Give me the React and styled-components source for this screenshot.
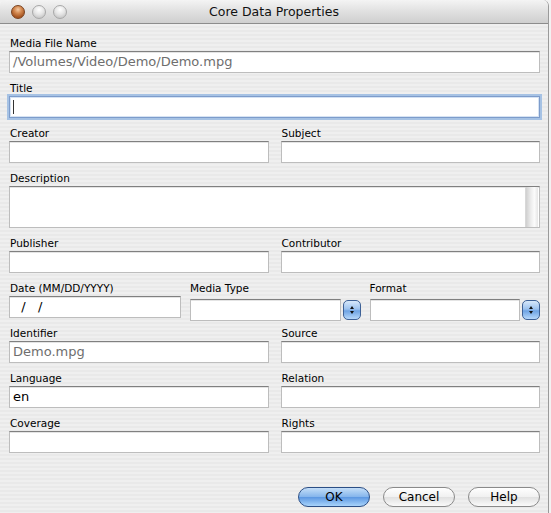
import React from "react";
import styled, { createGlobalStyle } from "styled-components";

const GlobalStyle = createGlobalStyle`
  body {
    margin: 0;
    background: #f2f2f2;
    font-family: "DejaVu Sans", "Liberation Sans", sans-serif;
  }
`;

const Window = styled.div`
  width: 549px;
  height: 513px;
  box-sizing: border-box;
  border-right: 1px solid #9a9a9a;
  border-radius: 6px 6px 0 0;
  overflow: hidden;
  display: flex;
  flex-direction: column;
  background: repeating-linear-gradient(
    to bottom,
    #efefef 0,
    #efefef 2px,
    #e9e9e9 2px,
    #e9e9e9 4px
  );
`;

const TitleBar = styled.div`
  position: relative;
  height: 23px;
  flex: none;
  display: flex;
  align-items: center;
  justify-content: center;
  border-bottom: 1px solid #8c8c8c;
  background: linear-gradient(to bottom, #f4f4f4, #dedede 55%, #cfcfcf);
`;

const Lights = styled.div`
  position: absolute;
  left: 11px;
  top: 5px;
  display: flex;
  gap: 7px;
`;

const Light = styled.span`
  width: 12px;
  height: 12px;
  border-radius: 50%;
  border: 1px solid ${(p) => (p.$close ? "#7a4320" : "#a8a8a8")};
  background: ${(p) =>
    p.$close
      ? "radial-gradient(circle at 50% 30%, #f3c9a2 0, #d48a52 35%, #a4521f 75%, #c77a3e 100%)"
      : "radial-gradient(circle at 50% 30%, #ffffff 0, #e6e6e6 45%, #c9c9c9 80%, #dedede 100%)"};
`;

const TitleText = styled.span`
  font-size: 12.5px;
  color: #111;
`;

const Form = styled.div`
  flex: 1;
  display: flex;
  flex-direction: column;
  gap: 8px;
  padding: 12px 8px 6px 9px;
`;

const Group = styled.div`
  display: flex;
  flex-direction: column;
  gap: 1px;
  flex: none;
  min-width: 0;
`;

const Row = styled.div`
  display: flex;
  gap: ${(p) => p.$gap || 12}px;

  & > ${Group} {
    flex: 1 1 0;
  }
`;

const Label = styled.div`
  font-size: 10.5px;
  line-height: 14px;
  height: 14px;
  padding-left: 1px;
  color: #000;
  white-space: nowrap;
`;

const Field = styled.div`
  position: relative;
  box-sizing: border-box;
  height: ${(p) => p.$height || 22}px;
  background: #fff;
  border: 1px solid #bdbdbd;
  border-top-color: #808080;
  box-shadow: ${(p) =>
    p.$focus ? "0 0 0 2px #a6c2e4, inset 0 0 0 1px #d6e3f3" : "inset 0 1px 0 #e4e4e4"};
  border-color: ${(p) => (p.$focus ? "#7d9ccb" : undefined)};
  font-size: 13px;
  line-height: 20px;
  padding: 0 3px;
  color: ${(p) => p.$color || "#000"};
  white-space: pre;
  overflow: hidden;
`;

const Caret = styled.span`
  display: inline-block;
  vertical-align: top;
  width: 1px;
  height: 14px;
  margin-top: 3px;
  background: #333;
`;

const ScrollTrack = styled.div`
  position: absolute;
  right: 1px;
  top: 0;
  bottom: 0;
  width: 12px;
  background: linear-gradient(to right, #cfcfcf, #ececec 40%, #fbfbfb 70%, #e6e6e6);
  border-left: 1px solid #d8d8d8;
`;

const Combo = styled.div`
  display: flex;
  align-items: center;
  gap: 2px;
  margin: 3px 0 -3px 1px;
`;

const ComboField = styled(Field)`
  flex: 1;
`;

const Stepper = styled.div`
  flex: none;
  box-sizing: border-box;
  width: 18px;
  height: 20px;
  border-radius: 5px;
  border: 1px solid #3e6196;
  background: linear-gradient(to bottom, #d7e8fa, #9cc2ef 45%, #6ea3e3 55%, #b6d8fb);
  display: flex;
  flex-direction: column;
  align-items: center;
  justify-content: center;
  gap: 2px;
`;

const Arrow = styled.span`
  width: 0;
  height: 0;
  border-left: 2.5px solid transparent;
  border-right: 2.5px solid transparent;
  ${(p) => (p.$down ? "border-top: 3px solid #111;" : "border-bottom: 3px solid #111;")}
`;

const Footer = styled.div`
  margin-top: auto;
  display: flex;
  justify-content: flex-end;
  gap: 13px;
`;

const Button = styled.div`
  box-sizing: border-box;
  width: 72px;
  height: 20px;
  border-radius: 10px;
  display: flex;
  align-items: center;
  justify-content: center;
  font-size: 12px;
  color: #000;
  border: 1px solid ${(p) => (p.$primary ? "#2c4f86" : "#8a8a8a")};
  background: ${(p) =>
    p.$primary
      ? "linear-gradient(to bottom, #c4def8, #86b6ec 48%, #5d98e2 52%, #a9d4fb)"
      : "linear-gradient(to bottom, #ffffff, #f1f1f1 48%, #e1e1e1 52%, #fafafa)"};
`;

const TextBox = ({ label, value, color, focus, width, height, children }) => (
  <Group style={width ? { flex: `0 0 ${width}px` } : undefined}>
    <Label>{label}</Label>
    <Field $color={color} $focus={focus} $height={height}>
      {value}
      {children}
    </Field>
  </Group>
);

const PopUp = ({ label }) => (
  <Group>
    <Label>{label}</Label>
    <Combo>
      <ComboField />
      <Stepper>
        <Arrow />
        <Arrow $down />
      </Stepper>
    </Combo>
  </Group>
);

export default function App() {
  return (
    <>
      <GlobalStyle />
      <Window>
        <TitleBar>
          <Lights>
            <Light $close />
            <Light />
            <Light />
          </Lights>
          <TitleText>Core Data Properties</TitleText>
        </TitleBar>
        <Form>
          <TextBox label="Media File Name" value="/Volumes/Video/Demo/Demo.mpg" color="#6e6e6e" />
          <TextBox label="Title" focus>
            <Caret />
          </TextBox>
          <Row>
            <TextBox label="Creator" />
            <TextBox label="Subject" />
          </Row>
          <TextBox label="Description" height={42}>
            <ScrollTrack />
          </TextBox>
          <Row>
            <TextBox label="Publisher" />
            <TextBox label="Contributor" />
          </Row>
          <Row $gap={8}>
            <TextBox label="Date (MM/DD/YYYY)" value="  /   /" width={172} />
            <PopUp label="Media Type" />
            <PopUp label="Format" />
          </Row>
          <Row>
            <TextBox label="Identifier" value="Demo.mpg" color="#6e6e6e" />
            <TextBox label="Source" />
          </Row>
          <Row>
            <TextBox label="Language" value="en" />
            <TextBox label="Relation" />
          </Row>
          <Row>
            <TextBox label="Coverage" />
            <TextBox label="Rights" />
          </Row>
          <Footer>
            <Button $primary>OK</Button>
            <Button>Cancel</Button>
            <Button>Help</Button>
          </Footer>
        </Form>
      </Window>
    </>
  );
}
